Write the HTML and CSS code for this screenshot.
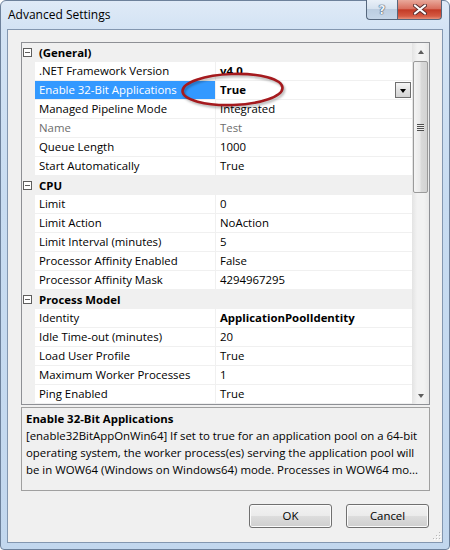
FILE: index.html
```html
<!DOCTYPE html>
<html>
<head>
<meta charset="utf-8">
<link rel="stylesheet" href="styles.css">
</head>
<body>
<div class="window">
  <div class="titlebar">
    <span class="title">Advanced Settings</span>
    <div class="caption">
      <div class="cbtn help"><span class="q">?</span></div>
      <div class="cbtn close">
        <svg width="14" height="11" viewBox="0 0 14 11">
          <path d="M2 1.5 L12 9.5 M12 1.5 L2 9.5" stroke="#5a3030" stroke-width="4" stroke-linecap="round"/>
          <path d="M2 1.5 L12 9.5 M12 1.5 L2 9.5" stroke="#ffffff" stroke-width="2.2" stroke-linecap="round"/>
        </svg>
      </div>
    </div>
  </div>
  <div class="client">
    <div class="grid">
      <div class="rows">
        <div class="row cat"><span class="margin"><span class="minus"></span></span><span class="catname">(General)</span></div>
        <div class="row"><span class="margin"></span><span class="name">.NET Framework Version</span><span class="val b">v4.0</span></div>
        <div class="row sel"><span class="margin"></span><span class="name">Enable 32-Bit Applications</span><span class="val b">True<span class="dd"><span class="tri"></span></span></span></div>
        <div class="row"><span class="margin"></span><span class="name">Managed Pipeline Mode</span><span class="val">Integrated</span></div>
        <div class="row ro"><span class="margin"></span><span class="name">Name</span><span class="val">Test</span></div>
        <div class="row"><span class="margin"></span><span class="name">Queue Length</span><span class="val">1000</span></div>
        <div class="row"><span class="margin"></span><span class="name">Start Automatically</span><span class="val">True</span></div>
        <div class="row cat"><span class="margin"><span class="minus"></span></span><span class="catname">CPU</span></div>
        <div class="row"><span class="margin"></span><span class="name">Limit</span><span class="val">0</span></div>
        <div class="row"><span class="margin"></span><span class="name">Limit Action</span><span class="val">NoAction</span></div>
        <div class="row"><span class="margin"></span><span class="name">Limit Interval (minutes)</span><span class="val">5</span></div>
        <div class="row"><span class="margin"></span><span class="name">Processor Affinity Enabled</span><span class="val">False</span></div>
        <div class="row"><span class="margin"></span><span class="name">Processor Affinity Mask</span><span class="val">4294967295</span></div>
        <div class="row cat"><span class="margin"><span class="minus"></span></span><span class="catname">Process Model</span></div>
        <div class="row"><span class="margin"></span><span class="name">Identity</span><span class="val b">ApplicationPoolIdentity</span></div>
        <div class="row"><span class="margin"></span><span class="name">Idle Time-out (minutes)</span><span class="val">20</span></div>
        <div class="row"><span class="margin"></span><span class="name">Load User Profile</span><span class="val">True</span></div>
        <div class="row"><span class="margin"></span><span class="name">Maximum Worker Processes</span><span class="val">1</span></div>
        <div class="row"><span class="margin"></span><span class="name">Ping Enabled</span><span class="val">True</span></div>
      </div>
      <div class="scrollbar">
        <div class="sbtn"><span class="arrow up"></span></div>
        <div class="thumb"><span class="grip-lines"></span></div>
        <div class="track"></div>
        <div class="sbtn"><span class="arrow down"></span></div>
      </div>
    </div>
    <div class="desc">
      <div class="desc-title">Enable 32-Bit Applications</div>
      <div class="desc-line">[enable32BitAppOnWin64] If set to true for an application pool on a 64-bit</div>
      <div class="desc-line">operating system, the worker process(es) serving the application pool will</div>
      <div class="desc-line">be in WOW64 (Windows on Windows64) mode. Processes in WOW64 mo...</div>
    </div>
    <div class="buttons">
      <div class="btn">OK</div>
      <div class="btn">Cancel</div>
    </div>
    <svg class="sizegrip" width="8" height="8" viewBox="0 0 8 8">
      <g fill="#ffffff">
        <rect x="7" y="1" width="1" height="1"/><rect x="7" y="4" width="1" height="1"/><rect x="7" y="7" width="1" height="1"/>
        <rect x="4" y="4" width="1" height="1"/><rect x="4" y="7" width="1" height="1"/><rect x="1" y="7" width="1" height="1"/>
      </g>
      <g fill="#b8b8b8">
        <rect x="6" y="0" width="1" height="1"/><rect x="6" y="3" width="1" height="1"/><rect x="6" y="6" width="1" height="1"/>
        <rect x="3" y="3" width="1" height="1"/><rect x="3" y="6" width="1" height="1"/><rect x="0" y="6" width="1" height="1"/>
      </g>
    </svg>
  </div>
  <svg class="annot" width="130" height="50" viewBox="0 0 130 50">
    <defs>
      <filter id="sh" x="-20%" y="-40%" width="140%" height="180%">
        <feGaussianBlur stdDeviation="1.2"/>
      </filter>
    </defs>
    <ellipse cx="64" cy="26.5" rx="50" ry="15.5" transform="rotate(-2 64 26.5)" fill="none" stroke="rgba(0,0,0,0.3)" stroke-width="2.5" filter="url(#sh)"/>
    <ellipse cx="62.5" cy="24.5" rx="50" ry="15.5" transform="rotate(-2 62.5 24.5)" fill="none" stroke="#a51a1e" stroke-width="2.6"/>
  </svg>
</div>
</body>
</html>
```

FILE: styles.css
```css
html, body {
  margin: 0;
  padding: 0;
  background: #ffffff;
}

body {
  font-family: "Open Sans", "Noto Sans", sans-serif;
  font-size: 11.4px;
  color: #000;
}

.window {
  box-sizing: border-box;
  position: relative;
  width: 450px;
  height: 550px;
  padding: 0 6px 6px 6px;
  border: 1px solid #6d819b;
  border-radius: 6px 6px 4px 4px;
  background: linear-gradient(to bottom, #dfeaf7 0px, #d3e3f4 28px, #c8dcf1 200px, #c2d7ee 550px);
  display: flex;
  flex-direction: column;
}

/* title bar */
.titlebar {
  height: 28px;
  display: flex;
  justify-content: space-between;
  align-items: flex-start;
}

.title {
  padding-left: 1px;
  line-height: 28px;
  font-size: 12px;
  color: #000;
}

.caption {
  display: flex;
  margin-top: -1px;
  margin-right: 1px;
}

.cbtn {
  box-sizing: border-box;
  height: 20px;
  border: 1px solid #56677d;
  border-top: none;
  display: flex;
  align-items: center;
  justify-content: center;
}

.help {
  width: 31px;
  border-right: none;
  border-radius: 0 0 0 4px;
  background: linear-gradient(to bottom, #e9f0f8 0%, #d6e2ef 45%, #bccde0 50%, #c6d6e8 100%);
}

.q {
  font-family: "DejaVu Sans", sans-serif;
  font-weight: bold;
  font-size: 12px;
  color: #eef3f9;
  text-shadow: 0 0 1px #3e5068, 0 0 1px #3e5068, 0 0 1px #3e5068;
  line-height: 18px;
}

.close {
  width: 45px;
  border-radius: 0 0 4px 0;
  background: linear-gradient(to bottom, #e9a99b 0%, #d9705f 45%, #c33b27 52%, #d55a43 85%, #e6907a 100%);
}

.close svg {
  display: block;
}

/* client area */
.client {
  flex: 1;
  position: relative;
  border: 1px solid #8397b0;
  background: #f0f0f0;
  padding: 12px 12px 14px 13px;
  display: flex;
  flex-direction: column;
}

/* property grid */
.grid {
  box-sizing: border-box;
  height: 363px;
  border: 1px solid #8e9095;
  background: #ffffff;
  display: flex;
}

.rows {
  width: 390px;
}

.row {
  display: grid;
  grid-template-columns: 13px 181px 196px;
  height: 19px;
}

.margin {
  background: #f0f0f0;
  display: flex;
  align-items: center;
}

.name,
.val {
  box-sizing: border-box;
  height: 19px;
  line-height: 18px;
  padding-left: 4px;
  border-bottom: 1px solid #f0f0f0;
  white-space: nowrap;
  overflow: hidden;
}

.name {
  border-right: 1px solid #f0f0f0;
}

.val {
  display: flex;
  align-items: center;
  justify-content: space-between;
}

.b {
  font-weight: bold;
}

.ro .name,
.ro .val {
  color: #6d6d6d;
}

.sel .name {
  background: #3399ff;
  color: #ffffff;
}

.cat {
  grid-template-columns: 13px 377px;
  background: #f0f0f0;
}

.catname {
  padding-left: 4px;
  font-weight: bold;
  line-height: 19px;
}

.minus {
  box-sizing: border-box;
  width: 9px;
  height: 9px;
  margin-left: 1px;
  border: 1px solid #5e5e5e;
  background: linear-gradient(#5e5e5e, #5e5e5e) center / 5px 1px no-repeat, #ffffff;
}

.dd {
  box-sizing: border-box;
  width: 16px;
  height: 16px;
  margin-right: 1px;
  border: 1px solid #6f6f6f;
  background: linear-gradient(to bottom, #f6f6f6, #e2e2e2 50%, #d4d4d4);
  display: flex;
  align-items: center;
  justify-content: center;
}

.tri {
  width: 0;
  height: 0;
  border-left: 3.5px solid transparent;
  border-right: 3.5px solid transparent;
  border-top: 4px solid #000;
  margin-top: 1px;
}

/* scrollbar */
.scrollbar {
  width: 17px;
  display: flex;
  flex-direction: column;
  background: linear-gradient(to right, #e3e3e3, #f2f2f2 30%, #f2f2f2 70%, #e8e8e8);
}

.sbtn {
  height: 17px;
  display: flex;
  align-items: center;
  justify-content: center;
}

.arrow {
  width: 0;
  height: 0;
  border-left: 3.5px solid transparent;
  border-right: 3.5px solid transparent;
}

.arrow.up {
  border-bottom: 4px solid #5d5d5d;
}

.arrow.down {
  border-top: 4px solid #5d5d5d;
}

.thumb {
  box-sizing: border-box;
  height: 132px;
  margin: 1px 1px 0 1px;
  border: 1px solid #9a9a9a;
  border-radius: 2px;
  background: linear-gradient(to right, #f4f4f4, #eaeaea 45%, #d9d9d9 55%, #d2d2d2);
  display: flex;
  align-items: center;
  justify-content: center;
}

.grip-lines {
  width: 7px;
  height: 7px;
  background: repeating-linear-gradient(to bottom, #4e4e4e 0px, #4e4e4e 1px, #eeeeee 1px, #eeeeee 2px);
}

.track {
  flex: 1;
}

/* description */
.desc {
  box-sizing: border-box;
  height: 84px;
  margin-top: 2px;
  border: 1px solid #a0a0a0;
  padding: 2px 4px;
  line-height: 17px;
  background: #f0f0f0;
}

.desc-title {
  font-weight: bold;
}

.desc-line {
  white-space: nowrap;
  overflow: hidden;
}

/* buttons */
.buttons {
  margin-top: 13px;
  margin-right: 1px;
  display: flex;
  justify-content: flex-end;
  gap: 14px;
}

.btn {
  box-sizing: border-box;
  width: 83px;
  height: 24px;
  border: 1px solid #707070;
  border-radius: 3px;
  background: linear-gradient(to bottom, #f2f2f2 0%, #ebebeb 50%, #dddddd 50%, #cfcfcf 100%);
  box-shadow: inset 0 0 0 1px #fbfbfb;
  text-align: center;
  line-height: 22px;
}

.sizegrip {
  position: absolute;
  right: 1px;
  bottom: 2px;
}

/* annotation ellipse */
.annot {
  position: absolute;
  left: 169px;
  top: 64px;
  pointer-events: none;
}
```
